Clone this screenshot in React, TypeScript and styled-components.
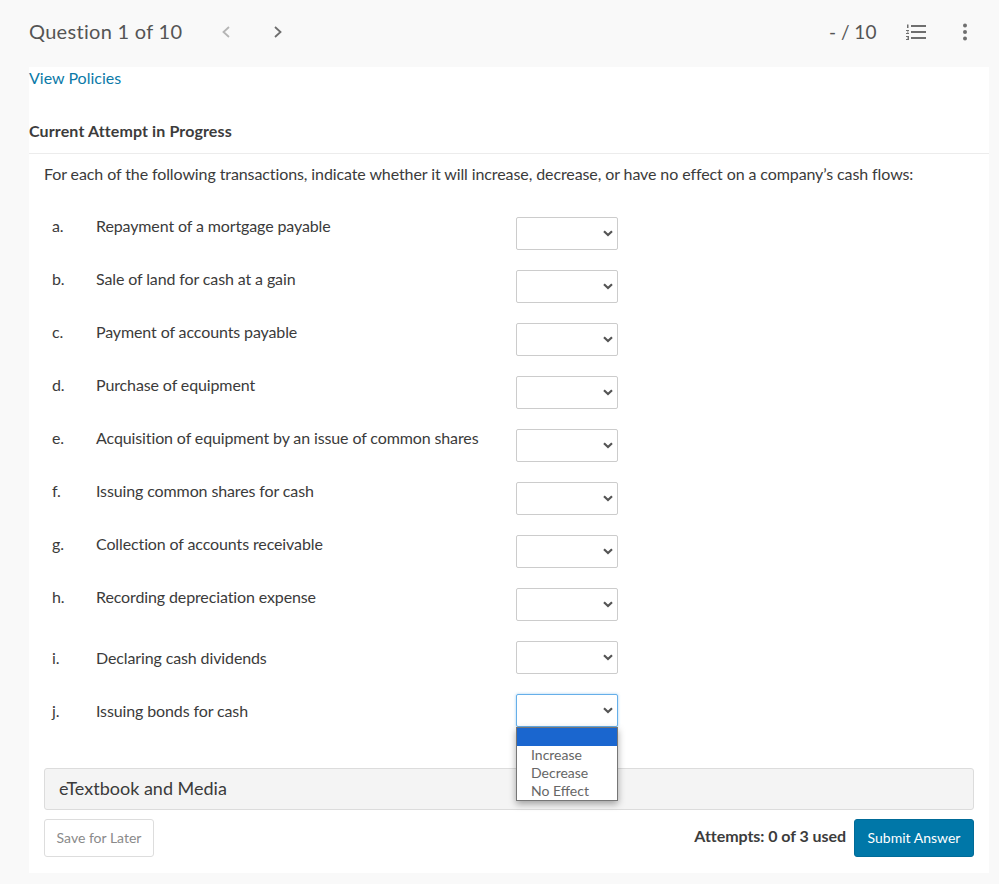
import React from 'react';
import styled, { createGlobalStyle } from 'styled-components';

const GlobalStyle = createGlobalStyle`
  html, body {
    margin: 0;
    padding: 0;
    background: #f9f9f9;
    font-family: Lato, "Open Sans", sans-serif;
    color: #3b3b3b;
  }
`;

const Page = styled.div`
  width: 999px;
  height: 884px;
  overflow: hidden;
`;

const Header = styled.header`
  height: 67px;
  display: flex;
  align-items: center;
  padding: 0 29px 3px;
  box-sizing: border-box;
`;

const QuestionTitle = styled.h1`
  margin: -2px 0 0;
  font-size: 20px;
  font-weight: 400;
  color: #555;
  letter-spacing: 0.3px;
  width: 188px;
`;

const NavButton = styled.button`
  border: none;
  background: none;
  padding: 0;
  width: 18px;
  height: 18px;
  display: flex;
  align-items: center;
  justify-content: center;
  margin-right: 34px;
  color: ${props => (props.disabled ? '#b5b5b5' : '#6e6e6e')};
`;

const HeaderRight = styled.div`
  margin-left: auto;
  display: flex;
  align-items: center;
`;

const Score = styled.span`
  font-size: 19px;
  color: #555;
  width: 77px;
  margin-top: -2px;
`;

const ListSlot = styled.span`
  display: flex;
  width: 56px;
  color: #6f6f6f;
`;

const DotsSlot = styled.span`
  display: flex;
  margin-right: 2px;
  color: #6f6f6f;
`;

const Content = styled.main`
  margin-left: 29px;
  width: 960px;
  height: 806px;
  background: #fff;
  position: relative;
  display: flex;
  flex-direction: column;
`;

const PolicyLink = styled.a`
  font-size: 16px;
  line-height: 22px;
  color: #0b7aa8;
  text-decoration: none;
`;

const AttemptHeading = styled.h2`
  margin: 31px 0 0;
  font-size: 16px;
  line-height: 22px;
  font-weight: 700;
  letter-spacing: 0.12px;
  color: #3c3c3c;
  padding-bottom: 11px;
  border-bottom: 1px solid #ececec;
`;

const Prompt = styled.p`
  margin: 9px 0 0 15px;
  font-size: 16px;
  line-height: 22px;
  letter-spacing: -0.1px;
  color: #3b3b3b;
`;

const List = styled.div`
  margin: 32px 0 0 15px;
  position: relative;
`;

const Row = styled.div<{ $low?: boolean }>`
  height: 53px;
  display: grid;
  grid-template-columns: 52px 420px 102px;
  align-items: start;
  font-size: 16px;
  line-height: 20px;
  letter-spacing: -0.12px;
  & > span {
    padding-top: ${props => (props.$low ? '8px' : '0')};
    margin-top: -1px;
  }
`;

const Letter = styled.span`
  padding-left: 8px;
`;

const chevronImage = encodeURIComponent(
  '<svg xmlns="http://www.w3.org/2000/svg" width="10" height="7" viewBox="0 0 10 7"><path d="M1 1.2 L5 5 L9 1.2" fill="none" stroke="#555" stroke-width="2.2"/></svg>',
);

const Answer = styled.select<{ $open?: boolean }>`
  width: 102px;
  height: 33px;
  box-sizing: border-box;
  appearance: none;
  background: #fff url("data:image/svg+xml,${chevronImage}") no-repeat 86px 12px;
  border: 1px solid ${props => (props.$open ? '#66afe9' : '#ccc')};
  border-radius: 2px;
  font-family: Lato, sans-serif;
  font-size: 14px;
  color: #444;
  box-shadow: ${props => (props.$open ? '0 0 3px rgba(102, 175, 233, 0.6)' : 'none')};
  outline: none;
`;

const Dropdown = styled.ul`
  position: absolute;
  left: 472px;
  top: 510px;
  width: 102px;
  height: 74px;
  margin: 0;
  padding: 0;
  box-sizing: border-box;
  list-style: none;
  background: #fff;
  border: 1px solid #767676;
  box-shadow: 0 3px 7px rgba(0, 0, 0, 0.35);
  z-index: 2;
  font-size: 14px;
  line-height: 18px;
  color: #666;
`;

const DropdownItem = styled.li<{ $active?: boolean }>`
  height: 18px;
  padding-left: 14px;
  background: ${props => (props.$active ? '#1a66cf' : 'transparent')};
`;

const MediaBar = styled.div`
  margin: 21px 15px 0;
  height: 42px;
  box-sizing: border-box;
  background: #f4f4f4;
  border: 1px solid #dcdcdc;
  border-radius: 3px;
  display: flex;
  align-items: center;
  padding: 0 0 2px 14px;
  font-size: 18px;
  color: #3b3b3b;
`;

const Footer = styled.div`
  margin: 9px 15px 0;
  display: flex;
  align-items: center;
  justify-content: space-between;
`;

const SaveButton = styled.button`
  width: 110px;
  height: 38px;
  padding: 0 0 2px;
  background: #fff;
  border: 1px solid #ddd;
  border-radius: 3px;
  font-family: inherit;
  font-size: 14px;
  color: #8a8a8a;
`;

const SubmitArea = styled.div`
  display: flex;
  align-items: center;
  gap: 8px;
`;

const AttemptCount = styled.span`
  font-size: 16px;
  font-weight: 700;
  letter-spacing: -0.05px;
  color: #3c3c3c;
  margin-top: -6px;
`;

const SubmitButton = styled.button`
  width: 120px;
  height: 38px;
  padding: 0 0 2px;
  background: #0077a8;
  border: 1px solid #006b98;
  border-radius: 3px;
  font-family: inherit;
  font-size: 14px;
  color: #fff;
`;

const items = [
  { letter: 'a.', text: 'Repayment of a mortgage payable' },
  { letter: 'b.', text: 'Sale of land for cash at a gain' },
  { letter: 'c.', text: 'Payment of accounts payable' },
  { letter: 'd.', text: 'Purchase of equipment' },
  { letter: 'e.', text: 'Acquisition of equipment by an issue of common shares' },
  { letter: 'f.', text: 'Issuing common shares for cash' },
  { letter: 'g.', text: 'Collection of accounts receivable' },
  { letter: 'h.', text: 'Recording depreciation expense' },
  { letter: 'i.', text: 'Declaring cash dividends', low: true },
  { letter: 'j.', text: 'Issuing bonds for cash', low: true },
];

const choices = ['Increase', 'Decrease', 'No Effect'];

const Chevron: React.FC<{ dir: 'left' | 'right' }> = ({ dir }) => (
  <svg width="10" height="14" viewBox="0 0 10 14" fill="none" stroke="currentColor" strokeWidth="1.8">
    <path d={dir === 'left' ? 'M8 2 L2.5 7 L8 12' : 'M2 2 L7.5 7 L2 12'} />
  </svg>
);

const NumberedListIcon = () => (
  <svg width="20" height="18" viewBox="0 0 20 18" fill="currentColor">
    <rect x="5" y="2" width="15" height="2" />
    <rect x="5" y="8" width="15" height="2" />
    <rect x="5" y="14" width="15" height="2" />
    <rect x="1" y="1.5" width="1.5" height="3.5" />
    <rect x="0" y="7" width="3" height="1" />
    <rect x="1" y="8.5" width="1.5" height="1" />
    <rect x="0" y="10" width="3" height="1" />
    <rect x="0" y="13" width="3" height="1" />
    <rect x="1.5" y="14" width="1.5" height="2.5" />
    <rect x="0" y="16" width="3" height="1" />
  </svg>
);

const DotsIcon = () => (
  <svg width="6" height="18" viewBox="0 0 6 18" fill="currentColor">
    <circle cx="3" cy="2.5" r="2" />
    <circle cx="3" cy="9" r="2" />
    <circle cx="3" cy="15.5" r="2" />
  </svg>
);

export default function App() {
  return (
    <Page>
      <GlobalStyle />
      <Header>
        <QuestionTitle>Question 1 of 10</QuestionTitle>
        <NavButton disabled>
          <Chevron dir="left" />
        </NavButton>
        <NavButton>
          <Chevron dir="right" />
        </NavButton>
        <HeaderRight>
          <Score>- / 10</Score>
          <ListSlot>
            <NumberedListIcon />
          </ListSlot>
          <DotsSlot>
            <DotsIcon />
          </DotsSlot>
        </HeaderRight>
      </Header>
      <Content>
        <PolicyLink href="#">View Policies</PolicyLink>
        <AttemptHeading>Current Attempt in Progress</AttemptHeading>
        <Prompt>
          For each of the following transactions, indicate whether it will increase, decrease, or have no effect on a
          company’s cash flows:
        </Prompt>
        <List>
          {items.map((item, index) => (
            <Row key={item.letter} $low={item.low}>
              <Letter>{item.letter}</Letter>
              <span>{item.text}</span>
              <Answer defaultValue="" $open={index === 9} aria-label={item.text}>
                <option value=""></option>
                {choices.map(choice => (
                  <option key={choice}>{choice}</option>
                ))}
              </Answer>
            </Row>
          ))}
          <Dropdown>
            <DropdownItem $active />
            {choices.map(choice => (
              <DropdownItem key={choice}>{choice}</DropdownItem>
            ))}
          </Dropdown>
        </List>
        <MediaBar>eTextbook and Media</MediaBar>
        <Footer>
          <SaveButton>Save for Later</SaveButton>
          <SubmitArea>
            <AttemptCount>Attempts: 0 of 3 used</AttemptCount>
            <SubmitButton>Submit Answer</SubmitButton>
          </SubmitArea>
        </Footer>
      </Content>
    </Page>
  );
}
